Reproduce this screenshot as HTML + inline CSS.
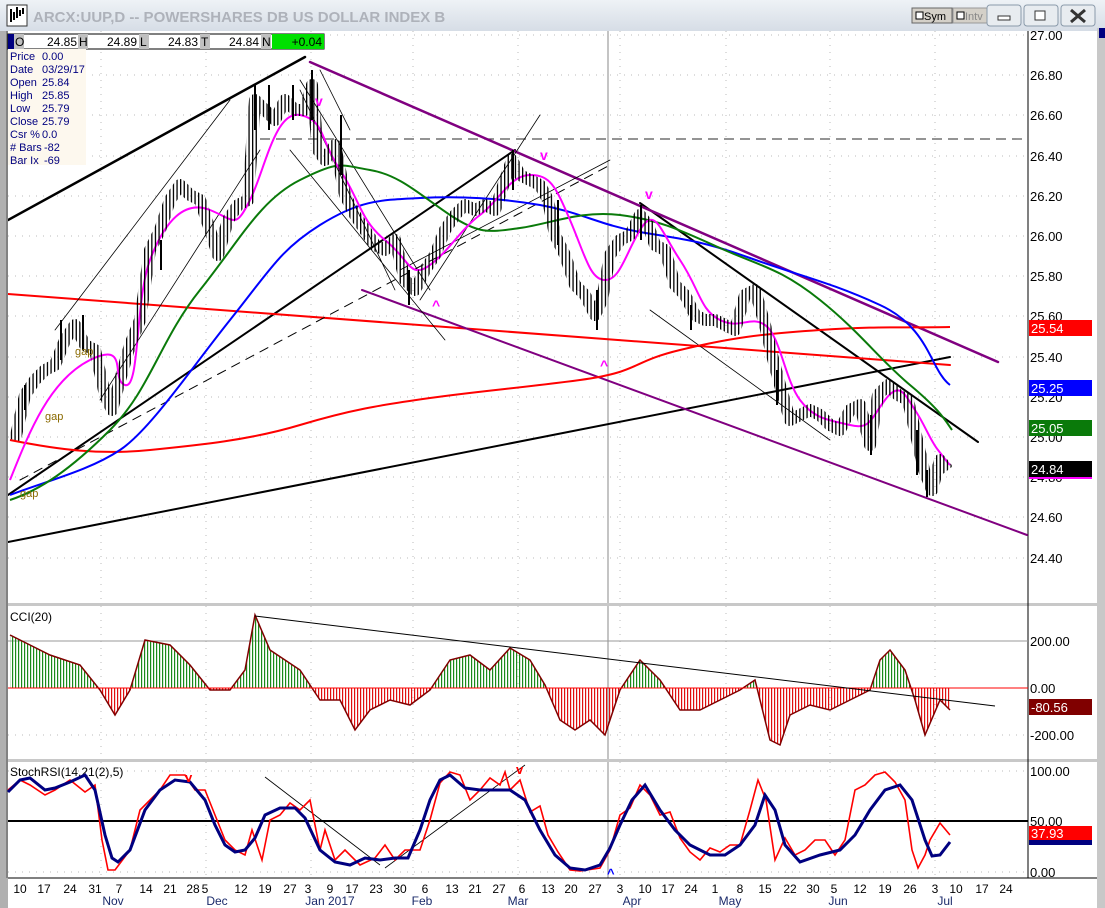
<!DOCTYPE html>
<html><head><meta charset="utf-8"><style>
html,body{margin:0;padding:0;width:1105px;height:908px;overflow:hidden;background:#fff;font-family:"Liberation Sans",sans-serif}
svg{display:block}
</style></head><body>
<svg width="1105" height="908" viewBox="0 0 1105 908" xmlns="http://www.w3.org/2000/svg" font-family="Liberation Sans, sans-serif">
<defs>
<linearGradient id="tb" x1="0" y1="0" x2="0" y2="1"><stop offset="0" stop-color="#eef2f6"/><stop offset="1" stop-color="#d6dde6"/></linearGradient>
<pattern id="gp" width="3" height="10" patternUnits="userSpaceOnUse"><rect x="0" y="0" width="1.2" height="10" fill="#1a8a1a"/></pattern>
<pattern id="rp" width="3" height="10" patternUnits="userSpaceOnUse"><rect x="0" y="0" width="1.2" height="10" fill="#e01010"/></pattern>
<pattern id="bp" width="3.6" height="10" patternUnits="userSpaceOnUse"><rect x="0" y="0" width="1.3" height="10" fill="#000"/></pattern>
<clipPath id="above"><rect x="8" y="600" width="1020" height="88"/></clipPath>
<clipPath id="below"><rect x="8" y="688" width="1020" height="72"/></clipPath>
<clipPath id="pc"><rect x="8" y="31" width="1020" height="573"/></clipPath>
</defs>
<rect x="0" y="0" width="1105" height="908" fill="#d4d0c8"/>
<rect x="0" y="0" width="1105" height="31" fill="url(#tb)"/>
<rect x="7" y="5" width="20" height="21" fill="#fff" stroke="#333"/>
<path d="M11 22V9M14 20V12M17 18V7M20 16V10M23 14V8" stroke="#000" stroke-width="2"/>
<text x="33" y="22" font-size="15" font-weight="bold" fill="#aeb2ba">ARCX:UUP,D -- POWERSHARES DB US DOLLAR INDEX B</text>
<rect x="912" y="8" width="40" height="15" fill="#d4d0c8" stroke="#666"/><rect x="916" y="12" width="7" height="7" fill="#fff" stroke="#000"/><text x="924" y="20" font-size="11">Sym</text>
<rect x="953" y="8" width="40" height="15" fill="#d4d0c8" stroke="#999"/><rect x="957" y="12" width="7" height="7" fill="#fff" stroke="#000"/><text x="965" y="20" font-size="11" fill="#888">Intv</text>
<rect x="987" y="5" width="34" height="21" rx="3" fill="#e8ecf0" stroke="#8a9aaa"/><rect x="998" y="16" width="12" height="4" fill="#fff" stroke="#333"/>
<rect x="1024" y="5" width="34" height="21" rx="3" fill="#e8ecf0" stroke="#8a9aaa"/><rect x="1035" y="11" width="10" height="9" fill="#fff" stroke="#333"/>
<rect x="1061" y="5" width="34" height="21" rx="3" fill="#e8ecf0" stroke="#8a9aaa"/><path d="M1071 10L1085 22M1085 10L1071 22" stroke="#333" stroke-width="3"/>
<rect x="1097" y="28" width="8" height="880" fill="#c8c8c8"/>
<rect x="1099" y="28" width="6" height="10" fill="#000080"/>
<rect x="8" y="31" width="1089" height="847" fill="#fff"/>
<rect x="0" y="31" width="8" height="877" fill="#b0b0b0"/>
<line x1="7" y1="31" x2="7" y2="878" stroke="#555"/>
<rect x="8" y="878" width="1089" height="30" fill="#fff"/>
<g stroke="#bbb" stroke-dasharray="1,6" stroke-width="1">
<path d="M8 35H1028M8 75H1028M8 115H1028M8 156H1028M8 196H1028M8 236H1028M8 276H1028M8 316H1028M8 357H1028M8 397H1028M8 437H1028M8 477H1028M8 517H1028M8 558H1028"/>
<path d="M101 31V604M206 31V604M311 31V604M413 31V604M518 31V604M620 31V604M726 31V604M830 31V604M935 31V604"/>
<path d="M8 641H1028M8 735H1028M101 606V760M206 606V760M311 606V760M413 606V760M518 606V760M620 606V760M726 606V760M830 606V760M935 606V760"/>
<path d="M8 771H1028M8 872H1028M101 762V878M206 762V878M311 762V878M413 762V878M518 762V878M620 762V878M726 762V878M830 762V878M935 762V878"/>
</g>
<line x1="608" y1="31" x2="608" y2="878" stroke="#888"/>
<rect x="8" y="603" width="1089" height="3" fill="#c8c8c8"/>
<rect x="8" y="759" width="1089" height="3" fill="#c8c8c8"/>
<line x1="1028" y1="31" x2="1028" y2="878" stroke="#000"/>
<line x1="8" y1="878" x2="1097" y2="878" stroke="#000"/>
<g clip-path="url(#pc)">
<line x1="260" y1="139" x2="1028" y2="139" stroke="#555" stroke-dasharray="10,6" stroke-width="1.2"/>
<g fill="none" stroke-linecap="round">
<path d="M8 220L305 57" stroke="#000" stroke-width="2.5"/>
<path d="M8 495L515 150" stroke="#000" stroke-width="2"/>
<path d="M8 542L950 357" stroke="#000" stroke-width="2"/>
<path d="M640 203L978 442" stroke="#000" stroke-width="2"/>
<path d="M8 294L950 365" stroke="#f00" stroke-width="2"/>
<path d="M310 62L998 362" stroke="#800080" stroke-width="2.5"/>
<path d="M362 290L1027 535" stroke="#800080" stroke-width="2"/>
<path d="M20 480L610 165" stroke="#000" stroke-width="1" stroke-dasharray="9,7"/>
<path d="M55 330L230 100M100 400L260 150M290 150L445 340M300 80L430 290M320 70L350 130M300 90L395 290M400 270L610 160M420 300L540 115M650 310L830 440" stroke="#000" stroke-width="0.8"/>
</g>
<g fill="none" stroke-width="2">
<path d="M10 440C60 450 100 455 150 450S250 440 300 425S380 405 430 398S520 388 580 380S630 362 680 350S760 334 820 330S900 328 950 327" stroke="#f00"/>
<path d="M10 495C50 480 90 470 120 450S190 370 230 320S280 250 320 225S380 200 420 198S500 198 540 205S600 225 640 232S700 240 750 258S830 282 880 305S930 370 950 385" stroke="#00f"/>
<path d="M10 500C40 490 70 470 110 430S160 340 200 290S260 200 300 180S340 165 370 170S420 195 450 215S490 232 520 228S580 210 620 215S680 230 720 248S780 268 820 300S880 360 910 385S945 420 952 430" stroke="#0a7a0a"/>
<path d="M10 480C30 430 50 380 90 360S110 380 125 385S135 300 150 260S185 200 210 210S235 230 250 200S275 110 300 115S320 140 340 170S360 220 385 240S410 280 430 265S460 230 480 215S510 175 530 175S555 185 570 220S590 280 605 280S625 255 640 230S660 230 680 260S700 310 720 320S750 315 765 325S785 380 800 400S830 420 850 425S870 420 885 400S905 395 915 410S930 440 938 450S945 460 950 465" stroke="#ff00ff"/>
</g>
<path d="M15 440L25 395L35 380L45 370L55 365L65 340L75 325L85 345L95 350L105 395L112 410L120 380L130 345L140 320L150 250L160 230L170 200L180 185L190 195L200 200L210 230L218 255L228 220L238 205L248 200L255 100L265 110L275 120L285 100L295 110L305 110L312 85L318 150L325 160L335 145L345 195L355 215L365 230L375 245L385 250L395 240L405 280L415 290L425 270L435 255L445 230L455 215L465 205L475 210L485 205L495 210L505 180L512 160L520 175L530 180L540 185L548 200L555 235L565 255L575 285L585 295L595 315L602 300L610 255L620 240L630 235L640 215L648 225L655 245L665 250L675 285L685 295L695 315L705 320L715 320L725 325L735 330L745 295L755 290L765 325L772 355L780 385L790 420L800 415L810 410L820 415L830 425L840 430L850 410L860 405L870 445L878 395L888 385L898 395L908 400L916 435L924 470L932 490L940 460L948 470" fill="none" stroke="url(#bp)" stroke-width="12" stroke-linejoin="round"/>
<g fill="#000"><rect x="24" y="385" width="2" height="25"/><rect x="60" y="320" width="2" height="40"/><rect x="82" y="315" width="2" height="35"/><rect x="160" y="240" width="2" height="30"/><rect x="254" y="85" width="2" height="45"/><rect x="268" y="85" width="2" height="45"/><rect x="292" y="85" width="2" height="35"/><rect x="311" y="70" width="2" height="50"/><rect x="340" y="115" width="2" height="60"/><rect x="408" y="270" width="2" height="35"/><rect x="512" y="150" width="2" height="40"/><rect x="557" y="200" width="2" height="45"/><rect x="596" y="290" width="2" height="40"/><rect x="640" y="205" width="2" height="35"/><rect x="690" y="305" width="2" height="25"/><rect x="776" y="370" width="2" height="35"/><rect x="870" y="415" width="2" height="40"/><rect x="916" y="430" width="2" height="45"/><rect x="926" y="470" width="2" height="27"/></g>
</g>
<g fill="#ff00ff" font-size="14" font-weight="bold"><text x="315" y="106">v</text><text x="540" y="160">v</text><text x="645" y="199">v</text><text x="432" y="310">^</text><text x="600" y="370">^</text></g>
<g fill="#8a6a00" font-size="11"><text x="45" y="420">gap</text><text x="75" y="355">gap</text><text x="20" y="497">gap</text></g>
<rect x="8" y="34" width="316" height="15" fill="#fff" stroke="#000"/>
<rect x="8" y="34" width="6" height="15" fill="#000080"/>
<g font-size="12"><rect x="14" y="34" width="10" height="15" fill="#c0c0c0"/><text x="15" y="46">O</text><text x="77" y="46" text-anchor="end">24.85</text>
<rect x="78" y="34" width="10" height="15" fill="#c0c0c0"/><text x="79" y="46">H</text><text x="137" y="46" text-anchor="end">24.89</text>
<rect x="139" y="34" width="10" height="15" fill="#c0c0c0"/><text x="140" y="46">L</text><text x="198" y="46" text-anchor="end">24.83</text>
<rect x="200" y="34" width="10" height="15" fill="#c0c0c0"/><text x="201" y="46">T</text><text x="259" y="46" text-anchor="end">24.84</text>
<rect x="261" y="34" width="10" height="15" fill="#c0c0c0"/><text x="262" y="46">N</text><rect x="272" y="34" width="52" height="15" fill="#00e000"/><text x="322" y="46" text-anchor="end">+0.04</text></g>
<rect x="8" y="49" width="78" height="116" fill="#fdf8ee"/>
<g font-size="11" fill="#000080"><text x="10" y="60">Price</text><text x="42" y="60">0.00</text><text x="10" y="73">Date</text><text x="42" y="73">03/29/17</text><text x="10" y="86">Open</text><text x="42" y="86">25.84</text><text x="10" y="99">High</text><text x="42" y="99">25.85</text><text x="10" y="112">Low</text><text x="42" y="112">25.79</text><text x="10" y="125">Close</text><text x="42" y="125">25.79</text><text x="10" y="138">Csr %</text><text x="42" y="138">0.0</text><text x="10" y="151"># Bars</text><text x="44" y="151">-82</text><text x="10" y="164">Bar Ix</text><text x="44" y="164">-69</text></g>
<g font-size="13"><text x="1030" y="40">27.00</text><text x="1030" y="80">26.80</text><text x="1030" y="120">26.60</text><text x="1030" y="161">26.40</text><text x="1030" y="201">26.20</text><text x="1030" y="241">26.00</text><text x="1030" y="281">25.80</text><text x="1030" y="321">25.60</text><text x="1030" y="362">25.40</text><text x="1030" y="402">25.20</text><text x="1030" y="442">25.00</text><text x="1030" y="482">24.80</text><text x="1030" y="522">24.60</text><text x="1030" y="563">24.40</text></g>
<rect x="1029" y="320" width="63" height="16" fill="#f00"/><text x="1031" y="333" font-size="13" fill="#fff">25.54</text>
<rect x="1029" y="380" width="63" height="16" fill="#00f"/><text x="1031" y="393" font-size="13" fill="#fff">25.25</text>
<rect x="1029" y="420" width="63" height="16" fill="#0a7a0a"/><text x="1031" y="433" font-size="13" fill="#fff">25.05</text>
<rect x="1029" y="461" width="63" height="16" fill="#000"/><text x="1031" y="474" font-size="13" fill="#fff">24.84</text>
<rect x="1029" y="477" width="63" height="2" fill="#f0f"/>
<text x="10" y="621" font-size="12">CCI(20)</text>
<line x1="8" y1="641" x2="1028" y2="641" stroke="#999"/>
<g>
<polygon clip-path="url(#above)" fill="url(#gp)" points="10,688 10,635 30,645 50,655 80,665 100,690 115,715 130,690 145,640 170,645 190,665 210,690 230,690 245,670 255,615 270,650 300,670 320,700 340,700 355,730 370,710 390,700 410,705 430,690 450,660 470,655 490,670 510,648 530,660 545,685 560,720 575,730 590,720 605,735 620,690 640,660 660,680 680,710 700,710 720,700 740,690 755,680 770,740 780,745 790,715 810,705 830,710 850,700 870,690 880,660 890,650 905,670 915,700 925,735 940,700 950,710 950,688"/>
<polygon clip-path="url(#below)" fill="url(#rp)" points="10,688 10,635 30,645 50,655 80,665 100,690 115,715 130,690 145,640 170,645 190,665 210,690 230,690 245,670 255,615 270,650 300,670 320,700 340,700 355,730 370,710 390,700 410,705 430,690 450,660 470,655 490,670 510,648 530,660 545,685 560,720 575,730 590,720 605,735 620,690 640,660 660,680 680,710 700,710 720,700 740,690 755,680 770,740 780,745 790,715 810,705 830,710 850,700 870,690 880,660 890,650 905,670 915,700 925,735 940,700 950,710 950,688"/>
<polyline fill="none" stroke="#800000" stroke-width="1.5" points="10,635 30,645 50,655 80,665 100,690 115,715 130,690 145,640 170,645 190,665 210,690 230,690 245,670 255,615 270,650 300,670 320,700 340,700 355,730 370,710 390,700 410,705 430,690 450,660 470,655 490,670 510,648 530,660 545,685 560,720 575,730 590,720 605,735 620,690 640,660 660,680 680,710 700,710 720,700 740,690 755,680 770,740 780,745 790,715 810,705 830,710 850,700 870,690 880,660 890,650 905,670 915,700 925,735 940,700 950,710"/>
</g>
<line x1="8" y1="688" x2="1028" y2="688" stroke="#f00"/>
<line x1="255" y1="616" x2="995" y2="706" stroke="#000" stroke-width="1"/>
<g font-size="13"><text x="1030" y="646">200.00</text><text x="1030" y="693">0.00</text><text x="1030" y="740">-200.00</text></g>
<rect x="1029" y="699" width="63" height="16" fill="#800000"/><text x="1031" y="712" font-size="13" fill="#fff">-80.56</text>
<line x1="8" y1="821" x2="1028" y2="821" stroke="#000" stroke-width="2"/>
<text x="10" y="776" font-size="12">StochRSI(14,21(2),5)</text>
<path d="M265 777L380 865M385 868L525 765" stroke="#000" stroke-width="0.8"/>
<polyline fill="none" stroke="#f00" stroke-width="1.6" points="8,790 20,780 30,785 45,795 55,790 70,780 85,792 95,785 102,840 108,870 115,870 130,850 140,810 150,800 160,790 170,775 185,775 195,790 205,790 215,815 225,840 235,850 245,855 252,830 262,860 270,820 280,815 290,803 300,810 310,800 320,850 325,830 335,860 345,850 360,865 375,858 385,845 395,860 405,850 420,850 430,820 440,783 450,772 460,775 470,800 480,790 490,778 500,785 505,772 510,790 520,780 530,812 540,806 548,835 558,852 570,870 580,871 600,868 610,850 620,815 630,808 640,785 650,795 660,815 670,812 680,838 690,852 700,860 710,848 720,852 730,845 740,845 750,810 758,780 766,800 775,860 785,838 795,855 805,850 815,840 825,840 835,855 845,840 855,790 865,785 875,775 885,772 895,782 905,800 912,850 918,868 925,855 930,840 940,823 950,835"/>
<polyline fill="none" stroke="#000080" stroke-width="3" points="8,792 20,780 30,778 45,790 55,788 70,782 85,775 95,790 105,835 112,858 118,862 130,850 145,810 160,790 175,780 190,782 205,800 215,825 225,845 235,852 245,850 255,838 265,815 280,808 295,808 305,818 320,850 335,862 350,865 365,858 380,860 395,858 408,858 420,830 430,800 440,780 450,775 465,788 480,790 495,790 510,790 525,800 540,830 555,855 570,868 585,870 600,865 610,848 620,825 632,800 645,785 660,810 675,830 690,845 710,855 725,855 740,845 755,825 765,795 775,810 785,845 800,862 820,855 840,850 855,835 870,810 885,790 900,785 912,800 925,840 932,856 940,855 950,842"/>
<g fill="#f00" font-size="13" font-weight="bold"><text x="185" y="782">v</text><text x="516" y="774">v</text></g>
<text x="607" y="878" fill="#00f" font-size="13" font-weight="bold">^</text>
<g font-size="13"><text x="1030" y="776">100.00</text><text x="1030" y="826">50.00</text><text x="1030" y="877">0.00</text></g>
<rect x="1029" y="826" width="63" height="14" fill="#f00"/><text x="1031" y="838" font-size="13" fill="#fff">37.93</text>
<rect x="1029" y="840" width="63" height="5" fill="#000080"/>
<g font-size="12" text-anchor="middle">
<text x="20" y="893">10</text><text x="44" y="893">17</text><text x="70" y="893">24</text><text x="95" y="893">31</text><text x="119" y="893">7</text><text x="146" y="893">14</text><text x="170" y="893">21</text><text x="193" y="893">28</text><text x="205" y="893">5</text><text x="241" y="893">12</text><text x="265" y="893">19</text><text x="290" y="893">27</text><text x="308" y="893">3</text><text x="330" y="893">9</text><text x="352" y="893">17</text><text x="376" y="893">23</text><text x="400" y="893">30</text><text x="425" y="893">6</text><text x="452" y="893">13</text><text x="475" y="893">21</text><text x="499" y="893">27</text><text x="522" y="893">6</text><text x="548" y="893">13</text><text x="571" y="893">20</text><text x="595" y="893">27</text><text x="620" y="893">3</text><text x="645" y="893">10</text><text x="668" y="893">17</text><text x="691" y="893">24</text><text x="715" y="893">1</text><text x="740" y="893">8</text><text x="765" y="893">15</text><text x="790" y="893">22</text><text x="813" y="893">30</text><text x="834" y="893">5</text><text x="860" y="893">12</text><text x="885" y="893">19</text><text x="910" y="893">26</text><text x="935" y="893">3</text><text x="956" y="893">10</text><text x="982" y="893">17</text><text x="1006" y="893">24</text>
</g>
<g font-size="12" fill="#1a2a6a" text-anchor="middle"><text x="113" y="905">Nov</text><text x="217" y="905">Dec</text><text x="330" y="905">Jan 2017</text><text x="422" y="905">Feb</text><text x="518" y="905">Mar</text><text x="632" y="905">Apr</text><text x="730" y="905">May</text><text x="838" y="905">Jun</text><text x="945" y="905">Jul</text></g>
</svg>
</body></html>
